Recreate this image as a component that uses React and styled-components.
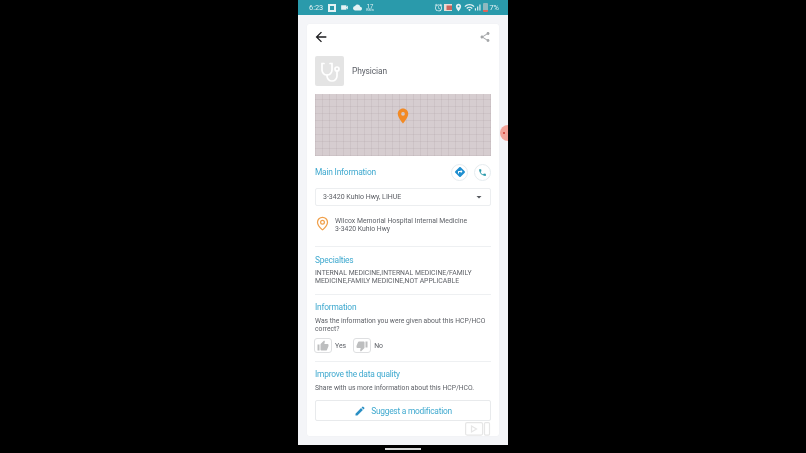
import React from 'react';
import styled, { createGlobalStyle } from 'styled-components';
import {
  MdArrowBack,
  MdShare,
  MdPlace,
  MdDirections,
  MdPhone,
  MdThumbUp,
  MdThumbDown,
  MdEdit,
  MdArrowDropDown,
  MdVideocam,
  MdCloud,
  MdAccessAlarm,
  MdLocationOn,
  MdWifi,
  MdSignalCellularAlt,
} from 'react-icons/md';
import { MapPin } from 'lucide-react';

const GlobalStyle = createGlobalStyle`
  html, body {
    margin: 0;
    padding: 0;
    background: #000;
    overflow: hidden;
  }
  * {
    box-sizing: border-box;
  }
`;

const Screen = styled.div`
  width: 806px;
  height: 453px;
  background: #000;
  display: flex;
  padding-left: 298px;
  font-family: Roboto, "Liberation Sans", sans-serif;
`;

const Phone = styled.div`
  position: relative;
  width: 210px;
  height: 453px;
  display: flex;
  flex-direction: column;
  background: #f4f5f8;
  overflow: hidden;
  filter: blur(0.35px);
`;

const StatusBar = styled.div`
  height: 15px;
  flex-shrink: 0;
  background: #2a9aab;
  color: #e4f2f4;
  display: flex;
  align-items: center;
  justify-content: space-between;
  padding: 0 9px 0 11px;
  font-size: 7.4px;
`;

const StatusGroup = styled.div`
  display: flex;
  align-items: center;
  gap: ${(p) => p.$gap}px;
`;

const AppGlyph = styled.span`
  width: 8px;
  height: 8px;
  border: 2px solid #e4f2f4;
  background: #2a9aab;
  margin-left: 3px;
`;

const Speed = styled.span`
  font-size: 3.5px;
  line-height: 3.5px;
  text-align: center;

  b {
    display: block;
    font-size: 6px;
    font-weight: 400;
    line-height: 5.5px;
  }
`;

const Battery = styled.span`
  width: 5px;
  height: 9px;
  background: linear-gradient(to top, #e0645a 0 25%, #8fb9bf 25%);
  border-radius: 1px;
`;

const Body = styled.div`
  flex: 1;
  padding: 9px;
`;

const Card = styled.div`
  height: 412px;
  background: #fff;
  border-radius: 2px;
  box-shadow: 0 0 1px rgba(0, 0, 0, 0.08);
  padding: 0 8px;
  display: flex;
  flex-direction: column;
`;

const TopRow = styled.div`
  height: 26px;
  display: flex;
  align-items: center;
  justify-content: space-between;
`;

const Heading = styled.div`
  display: flex;
  align-items: center;
  gap: 8px;
  margin-top: 6px;
  color: #5d6067;
  font-size: 8.4px;
  letter-spacing: -0.1px;
`;

const Avatar = styled.div`
  width: 29px;
  height: 30px;
  border-radius: 2px;
  background: #e4e4e4;
  display: flex;
  align-items: center;
  justify-content: center;
  color: #fff;
`;

const MapBox = styled.div`
  position: relative;
  height: 62px;
  margin-top: 8px;
  background-color: #d6cdd0;
  background-image:
    repeating-linear-gradient(90deg, rgba(150, 135, 140, 0.14) 0 1px, transparent 1px 7px),
    repeating-linear-gradient(0deg, rgba(150, 135, 140, 0.14) 0 1px, transparent 1px 7px);
`;

const MapPinMark = styled.div`
  position: absolute;
  left: 79px;
  top: 13px;
  color: #f28a25;
  display: flex;
`;

const MainRow = styled.div`
  height: 32px;
  display: flex;
  align-items: center;
  justify-content: space-between;
`;

const SectionTitle = styled.div`
  color: #3fa9cf;
  font-size: 8.4px;
  letter-spacing: -0.2px;
  line-height: 10px;
`;

const RoundGroup = styled.div`
  display: flex;
  gap: 6px;
`;

const RoundButton = styled.div`
  width: 17px;
  height: 17px;
  border-radius: 50%;
  background: #fff;
  border: 1px solid #e6ecef;
  color: ${(p) => p.$color};
  display: flex;
  align-items: center;
  justify-content: center;
`;

const Select = styled.div`
  height: 18px;
  border: 1px solid #eceef0;
  border-radius: 2px;
  display: flex;
  align-items: center;
  justify-content: space-between;
  padding: 0 5px 0 7px;
  color: #5a5d63;
  font-size: 7px;
`;

const AddressRow = styled.div`
  display: flex;
  gap: 5px;
  margin-top: 11px;
  padding-bottom: 13px;
  border-bottom: 1px solid #eef0f2;
`;

const PinSlot = styled.div`
  width: 15px;
  margin-top: -1px;
  color: #f0a04b;
  display: flex;
  justify-content: center;
`;

const BodyText = styled.div`
  color: #5f6268;
  font-size: ${(p) => p.$size || 6.85}px;
  line-height: 8px;
  white-space: pre-line;
`;

const Section = styled.div`
  padding: ${(p) => p.$top}px 0 ${(p) => p.$bottom}px;
  border-bottom: ${(p) => (p.$plain ? 'none' : '1px solid #eef0f2')};
  display: flex;
  flex-direction: column;
  gap: ${(p) => p.$gap}px;
`;

const Votes = styled.div`
  display: flex;
  align-items: center;
`;

const VoteButton = styled.div`
  width: 18px;
  height: 15px;
  margin-left: ${(p) => p.$shift || 0}px;
  border: 1px solid #dedfe1;
  border-radius: 3px;
  color: #bdbebf;
  display: flex;
  align-items: center;
  justify-content: center;
`;

const VoteLabel = styled.span`
  color: #5f6268;
  font-size: 6.9px;
  margin: 0 ${(p) => p.$right}px 0 3px;
`;

const SuggestButton = styled.div`
  height: 21px;
  margin-top: 3px;
  border: 1px solid #e8eaec;
  border-radius: 2px;
  display: flex;
  align-items: center;
  justify-content: center;
  gap: 5px;
  color: #3fa9cf;
  font-size: 8.4px;
  letter-spacing: -0.25px;
`;

const NavBar = styled.div`
  position: absolute;
  left: 0;
  right: 0;
  bottom: 0;
  height: 8px;
  background: #000;
  display: flex;
  align-items: center;
  justify-content: center;
`;

const NavHandle = styled.div`
  width: 36px;
  height: 1.5px;
  background: #d8d8d8;
`;

const FloatingDot = styled.div`
  position: absolute;
  left: 202px;
  top: 125px;
  width: 16px;
  height: 16px;
  border-radius: 50%;
  background: #f4a59a;

  &::after {
    content: '';
    position: absolute;
    left: 3px;
    top: 7px;
    width: 2px;
    height: 2px;
    background: #d9534a;
  }
`;

const Watermark = styled.div`
  position: absolute;
  left: 167px;
  top: 422px;
  color: #e6e6e6;
  display: flex;
`;

const StethoscopeIcon = () => (
  <svg width="22" height="22" viewBox="0 0 22 22" fill="none" stroke="currentColor" strokeWidth="1.7" strokeLinecap="round">
    <path d="M5 3.5H3V10a5 5 0 0 0 10 0V3.5H11" />
    <path d="M8 15v1a5 5 0 0 0 10 0v-5" />
    <circle cx="18" cy="9" r="2" />
  </svg>
);

export default function App() {
  return (
    <Screen>
      <GlobalStyle />
      <Phone>
        <StatusBar>
          <StatusGroup $gap={2}>
            <span>6:23</span>
            <AppGlyph />
            <MdVideocam size={9} style={{ marginLeft: 2 }} />
            <MdCloud size={9} style={{ marginLeft: 2 }} />
            <Speed style={{ marginLeft: 2 }}>
              <b>17</b>KB/s
            </Speed>
          </StatusGroup>
          <StatusGroup $gap={1}>
            <MdAccessAlarm size={9} />
            <svg width="8" height="7" viewBox="0 0 8 7">
              <rect width="8" height="7" fill="#e8dcd6" />
              <rect x="2.5" y="1.5" width="5.5" height="4.5" fill="#c9655d" />
            </svg>
            <MdLocationOn size={9} style={{ marginLeft: 1 }} />
            <MdWifi size={11} />
            <MdSignalCellularAlt size={9} style={{ marginLeft: -3 }} />
            <Battery />
            <span>7%</span>
          </StatusGroup>
        </StatusBar>
        <Body>
          <Card>
            <TopRow>
              <MdArrowBack size={16} color="#1d1d1f" style={{ marginLeft: -2 }} />
              <MdShare size={12} color="#a4a6a8" />
            </TopRow>
            <Heading>
              <Avatar>
                <StethoscopeIcon />
              </Avatar>
              Physician
            </Heading>
            <MapBox>
              <MapPinMark>
                <MdPlace size={18} />
              </MapPinMark>
            </MapBox>
            <MainRow>
              <SectionTitle>Main Information</SectionTitle>
              <RoundGroup>
                <RoundButton $color="#1f8fd0">
                  <MdDirections size={12} />
                </RoundButton>
                <RoundButton $color="#2a9aab">
                  <MdPhone size={9} />
                </RoundButton>
              </RoundGroup>
            </MainRow>
            <Select>
              3-3420 Kuhio Hwy, LIHUE
              <MdArrowDropDown size={12} color="#55585e" />
            </Select>
            <AddressRow>
              <PinSlot>
                <MapPin size={15} strokeWidth={2} />
              </PinSlot>
              <BodyText>{'Wilcox Memorial Hospital Internal Medicine\n3-3420 Kuhio Hwy'}</BodyText>
            </AddressRow>
            <Section $top={8} $bottom={9} $gap={4}>
              <SectionTitle>Specialties</SectionTitle>
              <BodyText>{'INTERNAL MEDICINE,INTERNAL MEDICINE/FAMILY\nMEDICINE,FAMILY MEDICINE,NOT APPLICABLE'}</BodyText>
            </Section>
            <Section $top={7} $bottom={8} $gap={5}>
              <SectionTitle>Information</SectionTitle>
              <BodyText $size={6.75}>{'Was the information you were given about this HCP/HCO\ncorrect?'}</BodyText>
              <Votes>
                <VoteButton $shift={-1}>
                  <MdThumbUp size={12} />
                </VoteButton>
                <VoteLabel $right={7}>Yes</VoteLabel>
                <VoteButton>
                  <MdThumbDown size={12} />
                </VoteButton>
                <VoteLabel $right={0}>No</VoteLabel>
              </Votes>
            </Section>
            <Section $top={7} $bottom={0} $gap={5} $plain>
              <SectionTitle>Improve the data quality</SectionTitle>
              <BodyText $size={6.75}>Share with us more information about this HCP/HCO.</BodyText>
              <SuggestButton>
                <MdEdit size={12} color="#2a8fc4" />
                Suggest a modification
              </SuggestButton>
            </Section>
          </Card>
        </Body>
        <FloatingDot />
        <Watermark>
          <svg width="26" height="14" viewBox="0 0 26 14" fill="none" stroke="currentColor" strokeWidth="1.2">
            <rect x="0.6" y="0.6" width="17" height="12.5" rx="1.5" />
            <path d="M6.5 4l5 3-5 3z" />
            <rect x="19.5" y="0.6" width="5" height="12.5" rx="1" />
          </svg>
        </Watermark>
        <NavBar>
          <NavHandle />
        </NavBar>
      </Phone>
    </Screen>
  );
}
